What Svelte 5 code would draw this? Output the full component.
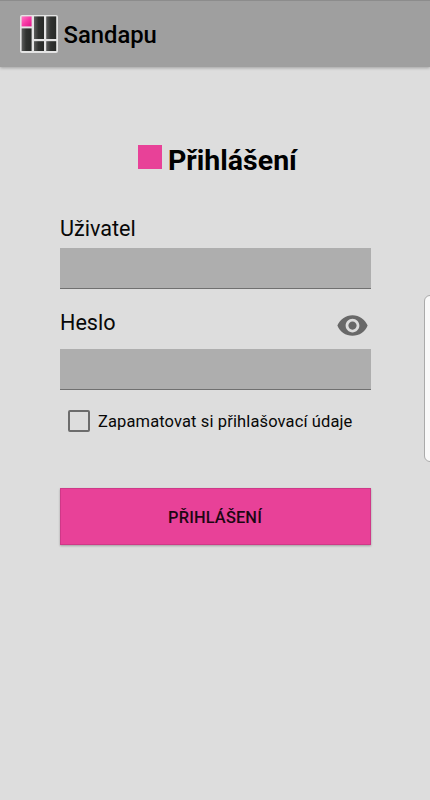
<script>
  let user = $state('');
  let password = $state('');
  let visible = $state(false);
  let remember = $state(false);
</script>

<div class="screen">
  <header>
    <svg class="logo" width="40" height="40" viewBox="0 0 40 40" aria-hidden="true">
      <defs>
        <linearGradient id="tile" x1="0" y1="0" x2="1" y2="0">
          <stop offset="0" stop-color="#5c5d5c" />
          <stop offset=".45" stop-color="#303230" />
          <stop offset="1" stop-color="#272927" />
        </linearGradient>
        <linearGradient id="pink" x1="0" y1="0" x2="1" y2="1">
          <stop offset="0" stop-color="#ff79c4" />
          <stop offset=".5" stop-color="#f83aa6" />
          <stop offset="1" stop-color="#df1688" />
        </linearGradient>
      </defs>
      <rect x="1" y="1" width="38" height="38" rx="2" fill="#e4e4e4" />
      <rect x="2.6" y="2.4" width="10" height="10" fill="url(#pink)" />
      <rect x="2.6" y="14.4" width="10" height="22.6" fill="url(#tile)" />
      <rect x="15" y="2.4" width="10" height="22.6" fill="url(#tile)" />
      <rect x="27.2" y="2.4" width="10" height="22.6" fill="url(#tile)" />
      <rect x="15" y="27.2" width="10" height="9.8" fill="url(#tile)" />
      <rect x="27.2" y="27.2" width="10" height="9.8" fill="url(#tile)" />
    </svg>
    <span class="brand">Sandapu</span>
  </header>

  <main>
    <h1><i class="mark"></i><span>Přihlášení</span></h1>

    <label class="caption" for="user">Uživatel</label>
    <input id="user" class="field" type="text" bind:value={user} />

    <div class="row">
      <label class="caption" for="password">Heslo</label>
      <button class="eye" type="button" aria-label="Heslo" onclick={() => (visible = !visible)}>
        <svg width="33" height="33" viewBox="0 0 24 24">
          <path
            fill="#686868"
            d="M12 4.5C7 4.5 2.73 7.61 1 12c1.73 4.39 6 7.5 11 7.5s9.27-3.11 11-7.5c-1.73-4.39-6-7.5-11-7.5zM12 17c-2.76 0-5-2.24-5-5s2.24-5 5-5 5 2.24 5 5-2.24 5-5 5zm0-8c-1.66 0-3 1.34-3 3s1.34 3 3 3 3-1.34 3-3-1.34-3-3-3z"
          />
        </svg>
      </button>
    </div>
    <input id="password" class="field" type={visible ? 'text' : 'password'} bind:value={password} />

    <label class="remember">
      <input type="checkbox" bind:checked={remember} />
      <span>Zapamatovat si přihlašovací údaje</span>
    </label>

    <button class="submit" type="button">PŘIHLÁŠENÍ</button>
  </main>

  <div class="edge"></div>
</div>

<style>
  :global(body) {
    margin: 0;
    background: #ddd;
  }
  .screen {
    position: relative;
    box-sizing: border-box;
    width: 430px;
    height: 800px;
    overflow: hidden;
    background: #ddd;
    color: #080808;
    font-family: Roboto, 'Liberation Sans', sans-serif;
  }
  header {
    display: flex;
    align-items: center;
    box-sizing: border-box;
    height: 67px;
    padding: 0 0 0 18.5px;
    border-top: 1px solid #8c8c8c;
    background: #9f9f9f;
    box-shadow: 0 1px 3px rgba(0, 0, 0, 0.28);
  }
  .logo {
    display: block;
  }
  .brand {
    margin: 1px 0 0 5px;
    color: #000;
    font-size: 23.8px;
    font-weight: 500;
    line-height: 30px;
  }
  main {
    display: flex;
    flex-direction: column;
    width: 311px;
    margin: 0 auto;
    padding-top: 76px;
  }
  h1 {
    display: flex;
    gap: 6.5px;
    margin: 0 0 0 78px;
    height: 36px;
    color: #000;
    font-size: 28.5px;
    font-weight: 700;
    line-height: 36px;
    white-space: nowrap;
  }
  .mark {
    width: 24px;
    height: 24px;
    margin-top: 2px;
    background: #e84198;
  }
  .caption {
    padding-left: 0.5px;
    font-size: 21.6px;
    line-height: 28px;
  }
  h1 + .caption {
    margin-top: 36px;
  }
  .field {
    box-sizing: border-box;
    width: 311px;
    height: 41px;
    padding: 0 8px;
    border: 0;
    border-bottom: 1px solid #707070;
    border-radius: 0;
    outline: 0;
    background: #aeaeae;
    font: 20px Roboto, sans-serif;
  }
  #user {
    margin: 5px 0 0;
  }
  .row {
    display: flex;
    justify-content: space-between;
    height: 40px;
    margin: 20px 0 0;
  }
  .eye {
    width: 33px;
    height: 33px;
    margin: -0.5px 2px 0 0;
    padding: 0;
    border: 0;
    background: none;
  }
  .eye svg {
    display: block;
  }
  .remember {
    display: flex;
    align-items: center;
    height: 24px;
    margin: 19px 0 0 8px;
    font-size: 16.5px;
    letter-spacing: 0.12px;
    white-space: nowrap;
  }
  .remember input {
    appearance: none;
    box-sizing: border-box;
    width: 22px;
    height: 22px;
    margin: 0 8.5px 0 0;
    border: 2px solid #6c6c6c;
    border-radius: 2px;
  }
  .submit {
    height: 57px;
    margin-top: 55px;
    padding: 2px 0 0;
    border: 1px solid #cf3888;
    border-radius: 0;
    background: #e84198;
    box-shadow: 0 1px 2px rgba(0, 0, 0, 0.28);
    color: #1d0713;
    font: 500 16.4px Roboto, sans-serif;
    letter-spacing: 0.15px;
  }
  .edge {
    position: absolute;
    top: 295px;
    left: 424px;
    box-sizing: border-box;
    width: 16px;
    height: 167px;
    border: 1px solid #aaa;
    border-radius: 6px;
    background: #f9f9f9;
  }
</style>
